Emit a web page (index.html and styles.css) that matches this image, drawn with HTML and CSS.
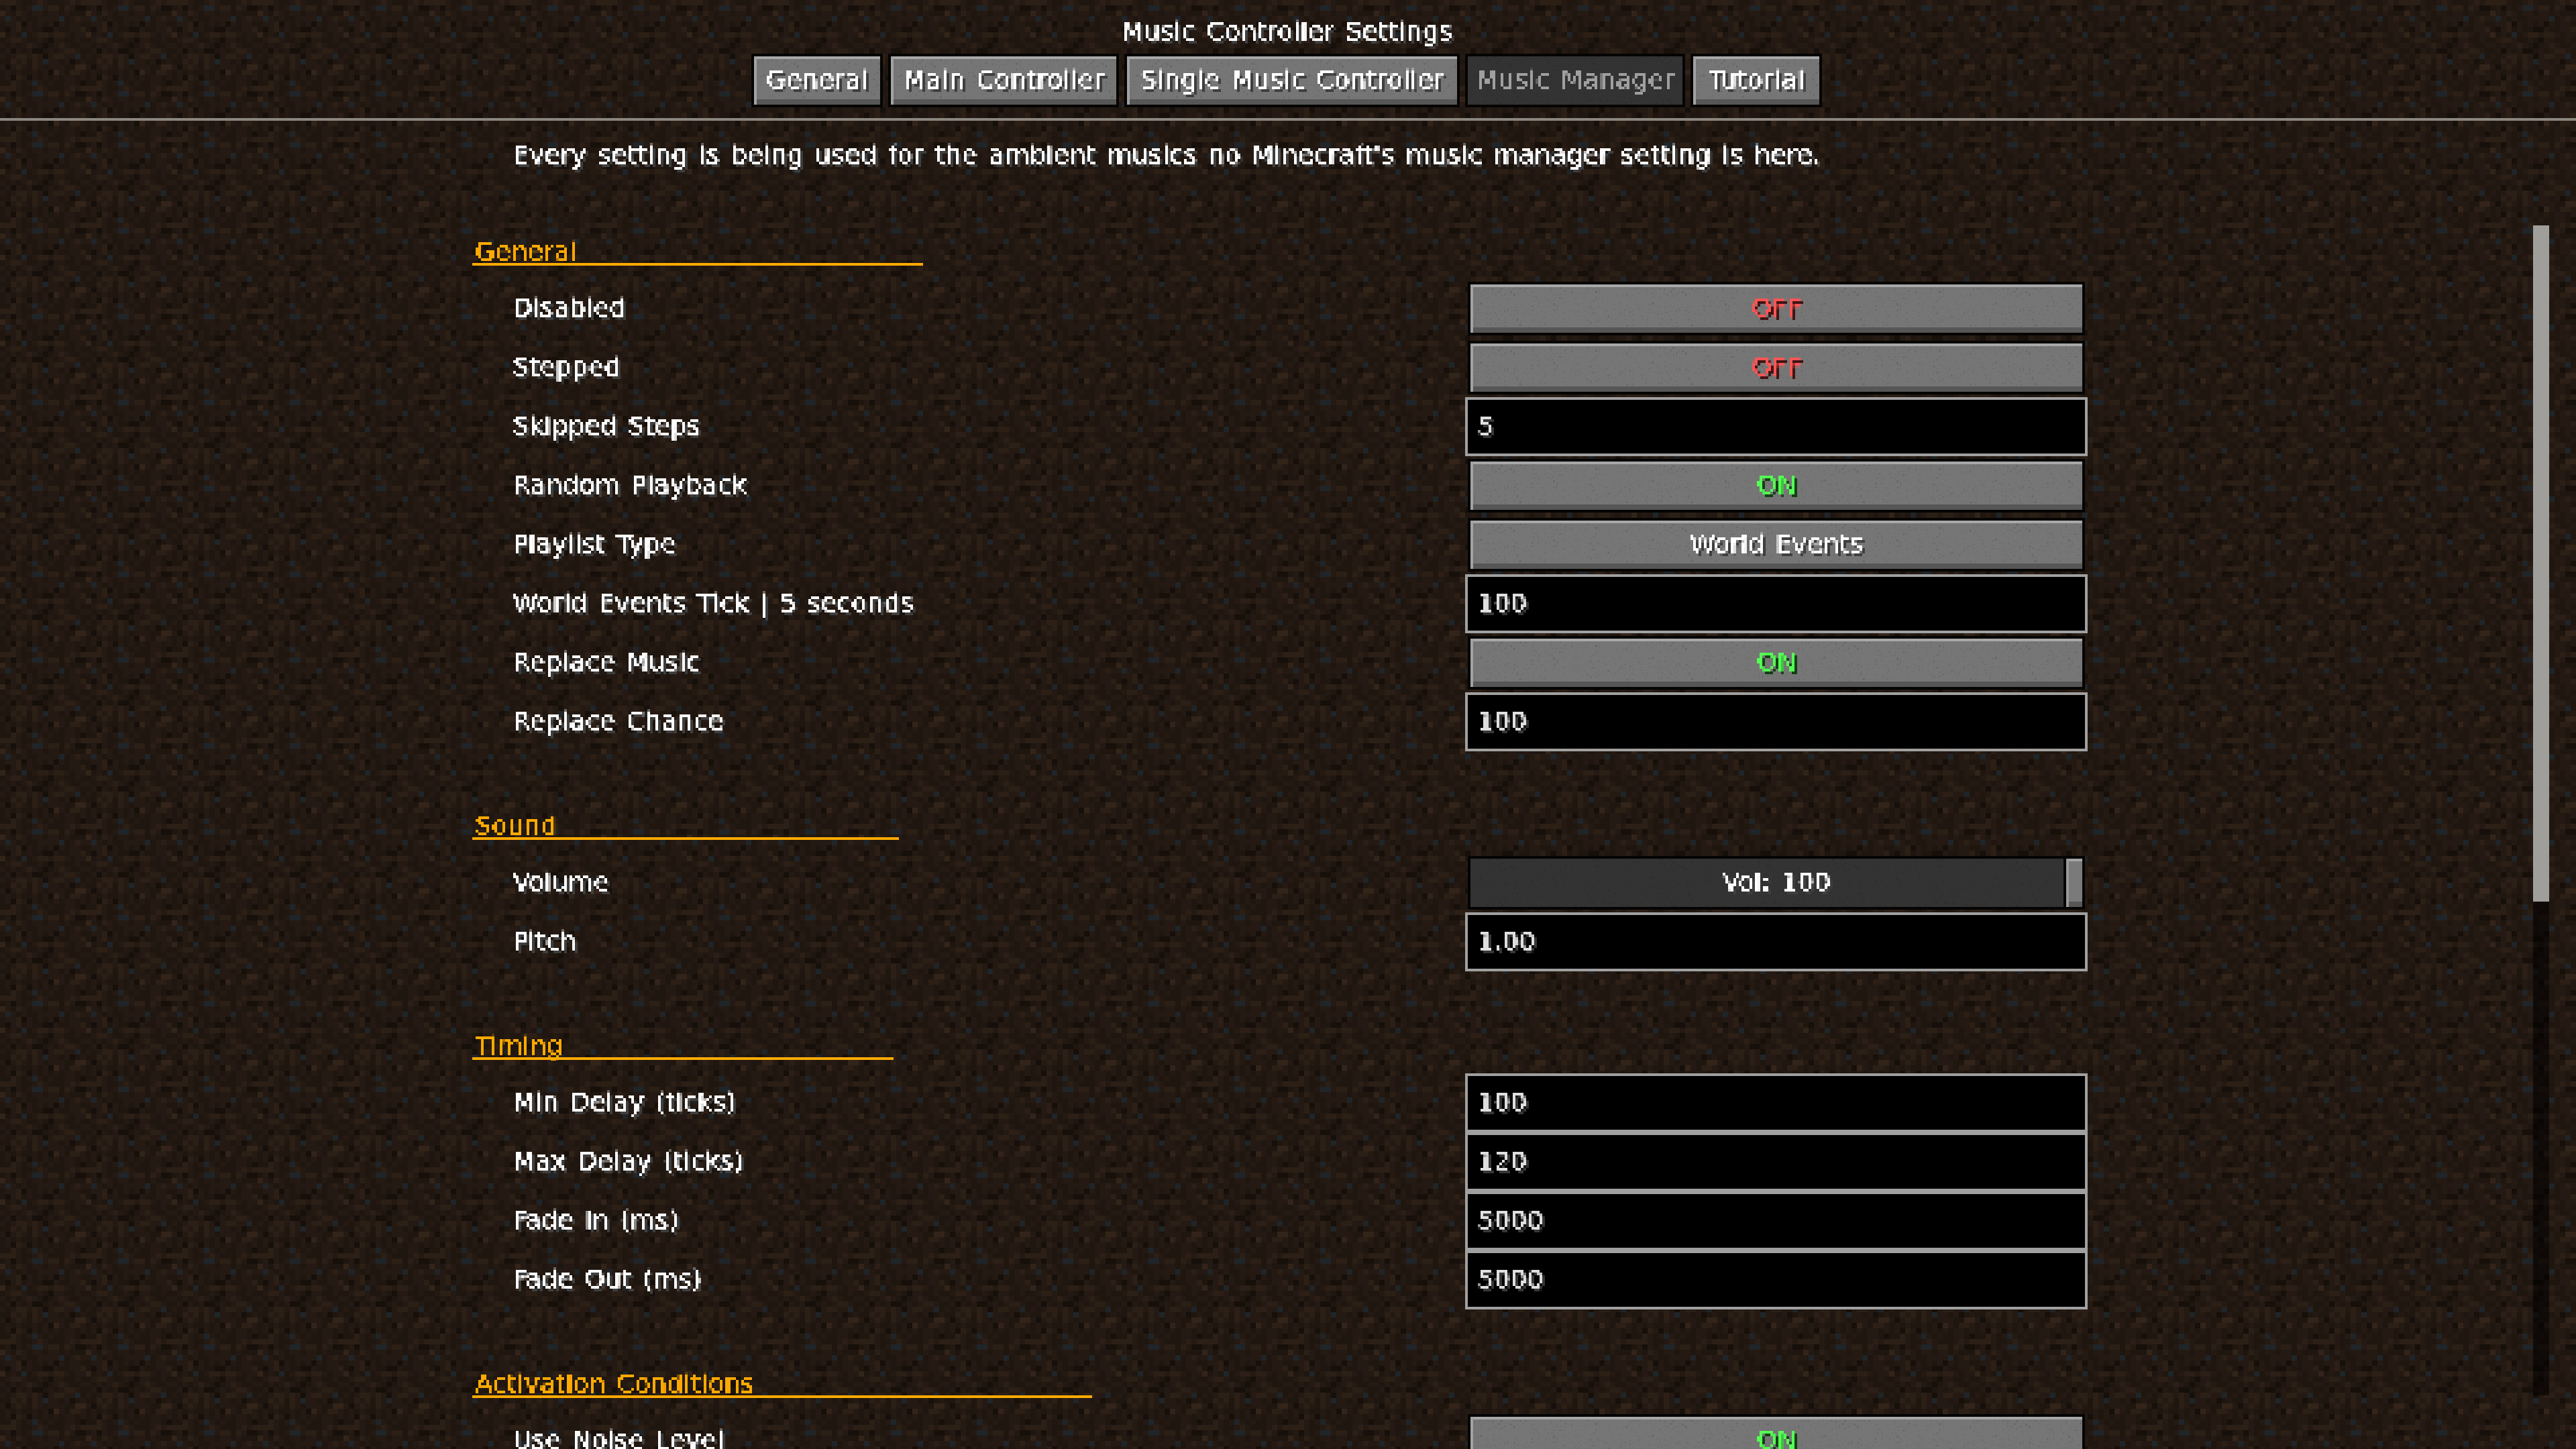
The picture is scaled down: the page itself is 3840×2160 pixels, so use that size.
FILE: index.html
```html
<!DOCTYPE html>
<html lang="en">
<head>
<meta charset="utf-8">
<title>Music Controller Settings</title>
<link rel="stylesheet" href="styles.css">
</head>
<body>
<svg class="defs" width="0" height="0" aria-hidden="true">
  <filter id="px" x="-5%" y="-40%" width="110%" height="190%" color-interpolation-filters="sRGB" primitiveUnits="userSpaceOnUse">
    <feFlood x="2" y="2" width="1" height="1" flood-color="#fff"/>
    <feComposite width="4" height="4"/>
    <feTile result="grid"/>
    <feComposite in="SourceGraphic" in2="grid" operator="in"/>
    <feConvolveMatrix order="4" kernelMatrix="1 1 1 1 1 1 1 1 1 1 1 1 1 1 1 1" divisor="1" targetX="2" targetY="2" edgeMode="none" preserveAlpha="false"/>
    <feComponentTransfer>
      <feFuncA type="linear" slope="3" intercept="-0.6"/>
    </feComponentTransfer>
  </filter>
</svg>
<header class="header">
  <div class="title"><span class="t">Music Controller Settings</span></div>
  <nav class="tabs">
    <div class="btn tab w188"><span class="t">General</span></div>
    <div class="btn tab w336"><span class="t">Main Controller</span></div>
    <div class="btn tab w492"><span class="t">Single Music Controller</span></div>
    <div class="btn tab w320 off"><span class="t">Music Manager</span></div>
    <div class="btn tab w188"><span class="t">Tutorial</span></div>
  </nav>
</header>
<main class="list">
  <p class="intro"><span class="t">Every setting is being used for the ambient musics no Minecraft's music manager setting is here.</span></p>

  <section class="section">
    <h2 class="head w672"><span class="t">General</span></h2>
    <div class="row"><span class="label"><span class="t">Disabled</span></span><div class="btn ctl red"><span class="t">OFF</span></div></div>
    <div class="row"><span class="label"><span class="t">Stepped</span></span><div class="btn ctl red"><span class="t">OFF</span></div></div>
    <div class="row"><span class="label"><span class="t">Skipped Steps</span></span><div class="field"><span class="t">5</span></div></div>
    <div class="row"><span class="label"><span class="t">Random Playback</span></span><div class="btn ctl green"><span class="t">ON</span></div></div>
    <div class="row"><span class="label"><span class="t">Playlist Type</span></span><div class="btn ctl"><span class="t">World Events</span></div></div>
    <div class="row"><span class="label"><span class="t">World Events Tick | 5 seconds</span></span><div class="field"><span class="t">100</span></div></div>
    <div class="row"><span class="label"><span class="t">Replace Music</span></span><div class="btn ctl green"><span class="t">ON</span></div></div>
    <div class="row"><span class="label"><span class="t">Replace Chance</span></span><div class="field"><span class="t">100</span></div></div>
  </section>

  <section class="section">
    <h2 class="head w636"><span class="t">Sound</span></h2>
    <div class="row"><span class="label"><span class="t">Volume</span></span><div class="slider"><span class="t">Vol: 100</span><i class="knob"></i></div></div>
    <div class="row"><span class="label"><span class="t">Pitch</span></span><div class="field"><span class="t">1.00</span></div></div>
  </section>

  <section class="section">
    <h2 class="head w628"><span class="t">Timing</span></h2>
    <div class="row"><span class="label"><span class="t">Min Delay (ticks)</span></span><div class="field"><span class="t">100</span></div></div>
    <div class="row"><span class="label"><span class="t">Max Delay (ticks)</span></span><div class="field"><span class="t">120</span></div></div>
    <div class="row"><span class="label"><span class="t">Fade In (ms)</span></span><div class="field"><span class="t">5000</span></div></div>
    <div class="row"><span class="label"><span class="t">Fade Out (ms)</span></span><div class="field"><span class="t">5000</span></div></div>
  </section>

  <section class="section">
    <h2 class="head w924"><span class="t">Activation Conditions</span></h2>
    <div class="row"><span class="label"><span class="t">Use Noise Level</span></span><div class="btn ctl green"><span class="t">ON</span></div></div>
  </section>

  <div class="scrollbar"><div class="thumb"></div></div>
</main>
</body>
</html>
```
FILE: styles.css
```css
* { box-sizing: border-box; }
:root {
  --dirt: url("data:image/svg+xml,%3Csvg xmlns='http://www.w3.org/2000/svg' width='128' height='128' viewBox='0 0 16 16' shape-rendering='crispEdges'%3E%3Crect width='16' height='16' fill='%23241a13'/%3E%3Cpath fill='none' stroke-width='1' stroke='%231f160f' d='M4 .5h2M9 .5h3M0 1.5h1M4 1.5h1M11 1.5h1M2 2.5h1M5 2.5h1M8 2.5h1M11 2.5h1M13 2.5h3M3 3.5h1M5 3.5h2M12 3.5h1M0 4.5h1M6 4.5h1M8 4.5h1M12 4.5h1M15 4.5h1M0 5.5h1M4 5.5h1M6 5.5h2M11 5.5h2M1 6.5h1M3 6.5h1M5 6.5h1M13 6.5h1M0 7.5h1M5 7.5h2M8 7.5h1M12 7.5h2M15 7.5h1M1 8.5h1M3 8.5h1M7 8.5h1M9 8.5h1M13 8.5h2M0 9.5h1M4 9.5h1M8 9.5h1M10 9.5h1M15 9.5h1M1 10.5h1M15 10.5h1M0 11.5h2M5 11.5h1M11 11.5h1M14 11.5h1M5 12.5h1M8 12.5h1M12 12.5h2M0 13.5h1M2 13.5h1M4 13.5h2M7 13.5h1M12 13.5h1M0 14.5h1M7 14.5h1M9 14.5h1M11 14.5h1M14 14.5h1M0 15.5h2M4 15.5h1M8 15.5h1M10 15.5h2M14 15.5h1'/%3E%3Cpath fill='none' stroke='%23160f0a' d='M2 1.5h1M14 1.5h2M4 4.5h1M10 4.5h1M1 5.5h1M8 5.5h2M9 7.5h1M8 8.5h1M2 9.5h1M6 9.5h2M8 10.5h1M13 11.5h1M1 12.5h1M9 13.5h1M2 14.5h1M5 14.5h1M15 15.5h1'/%3E%3Cpath fill='none' stroke='%232b1f16' d='M0 .5h3M7 .5h1M13 .5h1M15 .5h1M9 1.5h2M12 1.5h1M3 2.5h1M14 3.5h1M3 4.5h1M3 5.5h1M15 5.5h1M7 6.5h2M10 6.5h2M2 7.5h2M5 8.5h1M11 8.5h1M12 9.5h2M3 10.5h2M6 10.5h1M10 10.5h2M2 11.5h1M4 11.5h1M6 11.5h1M3 12.5h1M6 12.5h1M13 13.5h2M3 14.5h1M2 15.5h1'/%3E%3Cpath fill='none' stroke='%2333241a' d='M0 2.5h1M0 6.5h1M14 12.5h2M10 13.5h1'/%3E%3Cpath fill='none' stroke='%231f2529' d='M6 1.5h2M1 3.5h1M11 3.5h1M4 6.5h1M14 10.5h1M8 11.5h1M6 15.5h1'/%3E%3C/svg%3E");
  --noise: url("data:image/svg+xml,%3Csvg xmlns='http://www.w3.org/2000/svg' width='256' height='256'%3E%3Cfilter id='n'%3E%3CfeTurbulence baseFrequency='.22' numOctaves='2' seed='4'/%3E%3CfeColorMatrix values='0 0 0 0 0 0 0 0 0 0 0 0 0 0 0 0 0 0 .5 -.2'/%3E%3C/filter%3E%3Crect width='256' height='256' filter='url(%23n)'/%3E%3C/svg%3E");
}
html, body { margin: 0; height: 100%; }
body {
  width: 3840px;
  height: 2160px;
  overflow: hidden;
  color: #fff;
  font-family: "DejaVu Sans", sans-serif;
  font-size: 38px;
  line-height: 28px;
  letter-spacing: .4px;
  word-spacing: 4px;
  background: #241a13 var(--dirt);
}
.defs { position: absolute; }

.t {
  display: inline-block;
  white-space: pre;
  -webkit-text-stroke: .6px currentColor;
  text-shadow: 4px 4px 0 #3f3f3f;
  filter: url(#px);
}

.header {
  height: 180px;
  padding: 32px 4px 0 0;
  border-bottom: 4px solid #8b8680;
  text-align: center;
}
.title { height: 28px; }
.tabs { display: flex; justify-content: center; gap: 16px; margin-top: 24px; }

.btn {
  display: flex;
  align-items: center;
  justify-content: center;
  height: 72px;
  padding-bottom: 4px;
  background: var(--noise), #767676;
  box-shadow: 0 0 0 4px #050403, inset 4px 0 0 #a2a2a2, inset 0 4px 0 #a8a8a8, inset 0 -8px 0 #565656;
}
.tab { flex: none; }
.w188 { width: 188px; }
.w336 { width: 336px; }
.w492 { width: 492px; }
.w320 { width: 320px; }
.tab.off {
  background: var(--noise), #333;
  box-shadow: 0 0 0 4px #050403;
  color: #a0a0a0;
}
.tab.off .t { text-shadow: none; }

.list {
  position: relative;
  height: 1980px;
  padding: 6px 0 0 704px;
  background: #241a13 var(--dirt) 0 24px;
}
.intro {
  margin: 0 0 78px;
  padding-left: 60px;
  height: 88px;
  display: flex;
  align-items: center;
}
.section { margin-bottom: 88px; }
.head {
  height: 44px;
  margin: 0 0 20px;
  padding: 8px 0 0 4px;
  border-bottom: 4px solid #ffaa00;
  color: #ffaa00;
  font: inherit;
}
.head .t { text-shadow: none; }
.w672 { width: 672px; }
.w636 { width: 636px; }
.w628 { width: 628px; }
.w924 { width: 924px; }

.row {
  display: grid;
  grid-template-columns: 1480px 928px;
  height: 88px;
  align-items: center;
}
.label { padding: 0 0 4px 60px; }

.ctl { margin: 0 8px; }
.red { color: #ff5555; }
.red .t { text-shadow: 4px 4px 0 #3f1515; }
.green { color: #55ff55; }
.green .t { text-shadow: 4px 4px 0 #153f15; }

.field {
  display: flex;
  align-items: center;
  height: 88px;
  padding: 0 0 4px 14px;
  background: #000;
  border: 4px solid #a0a0a0;
  color: #e0e0e0;
}
.field .t { text-shadow: 4px 4px 0 #383838; }

.slider {
  position: relative;
  display: flex;
  align-items: center;
  justify-content: center;
  height: 72px;
  padding-bottom: 4px;
  margin: 0 8px;
  background: var(--noise), #333;
  box-shadow: 0 0 0 4px #050403;
}
.knob {
  position: absolute;
  top: 0;
  right: 0;
  width: 24px;
  height: 72px;
  background: #7a7a7a;
  box-shadow: inset 4px 0 0 #9a9a9a, inset 0 4px 0 #a4a4a4, inset 0 -8px 0 #565656, -4px 0 0 #050403;
}

.scrollbar {
  position: absolute;
  top: 156px;
  left: 3776px;
  width: 24px;
  height: 1744px;
  background: rgba(0, 0, 0, .55);
}
.thumb { height: 1008px; background: #a09e9b; }
```
